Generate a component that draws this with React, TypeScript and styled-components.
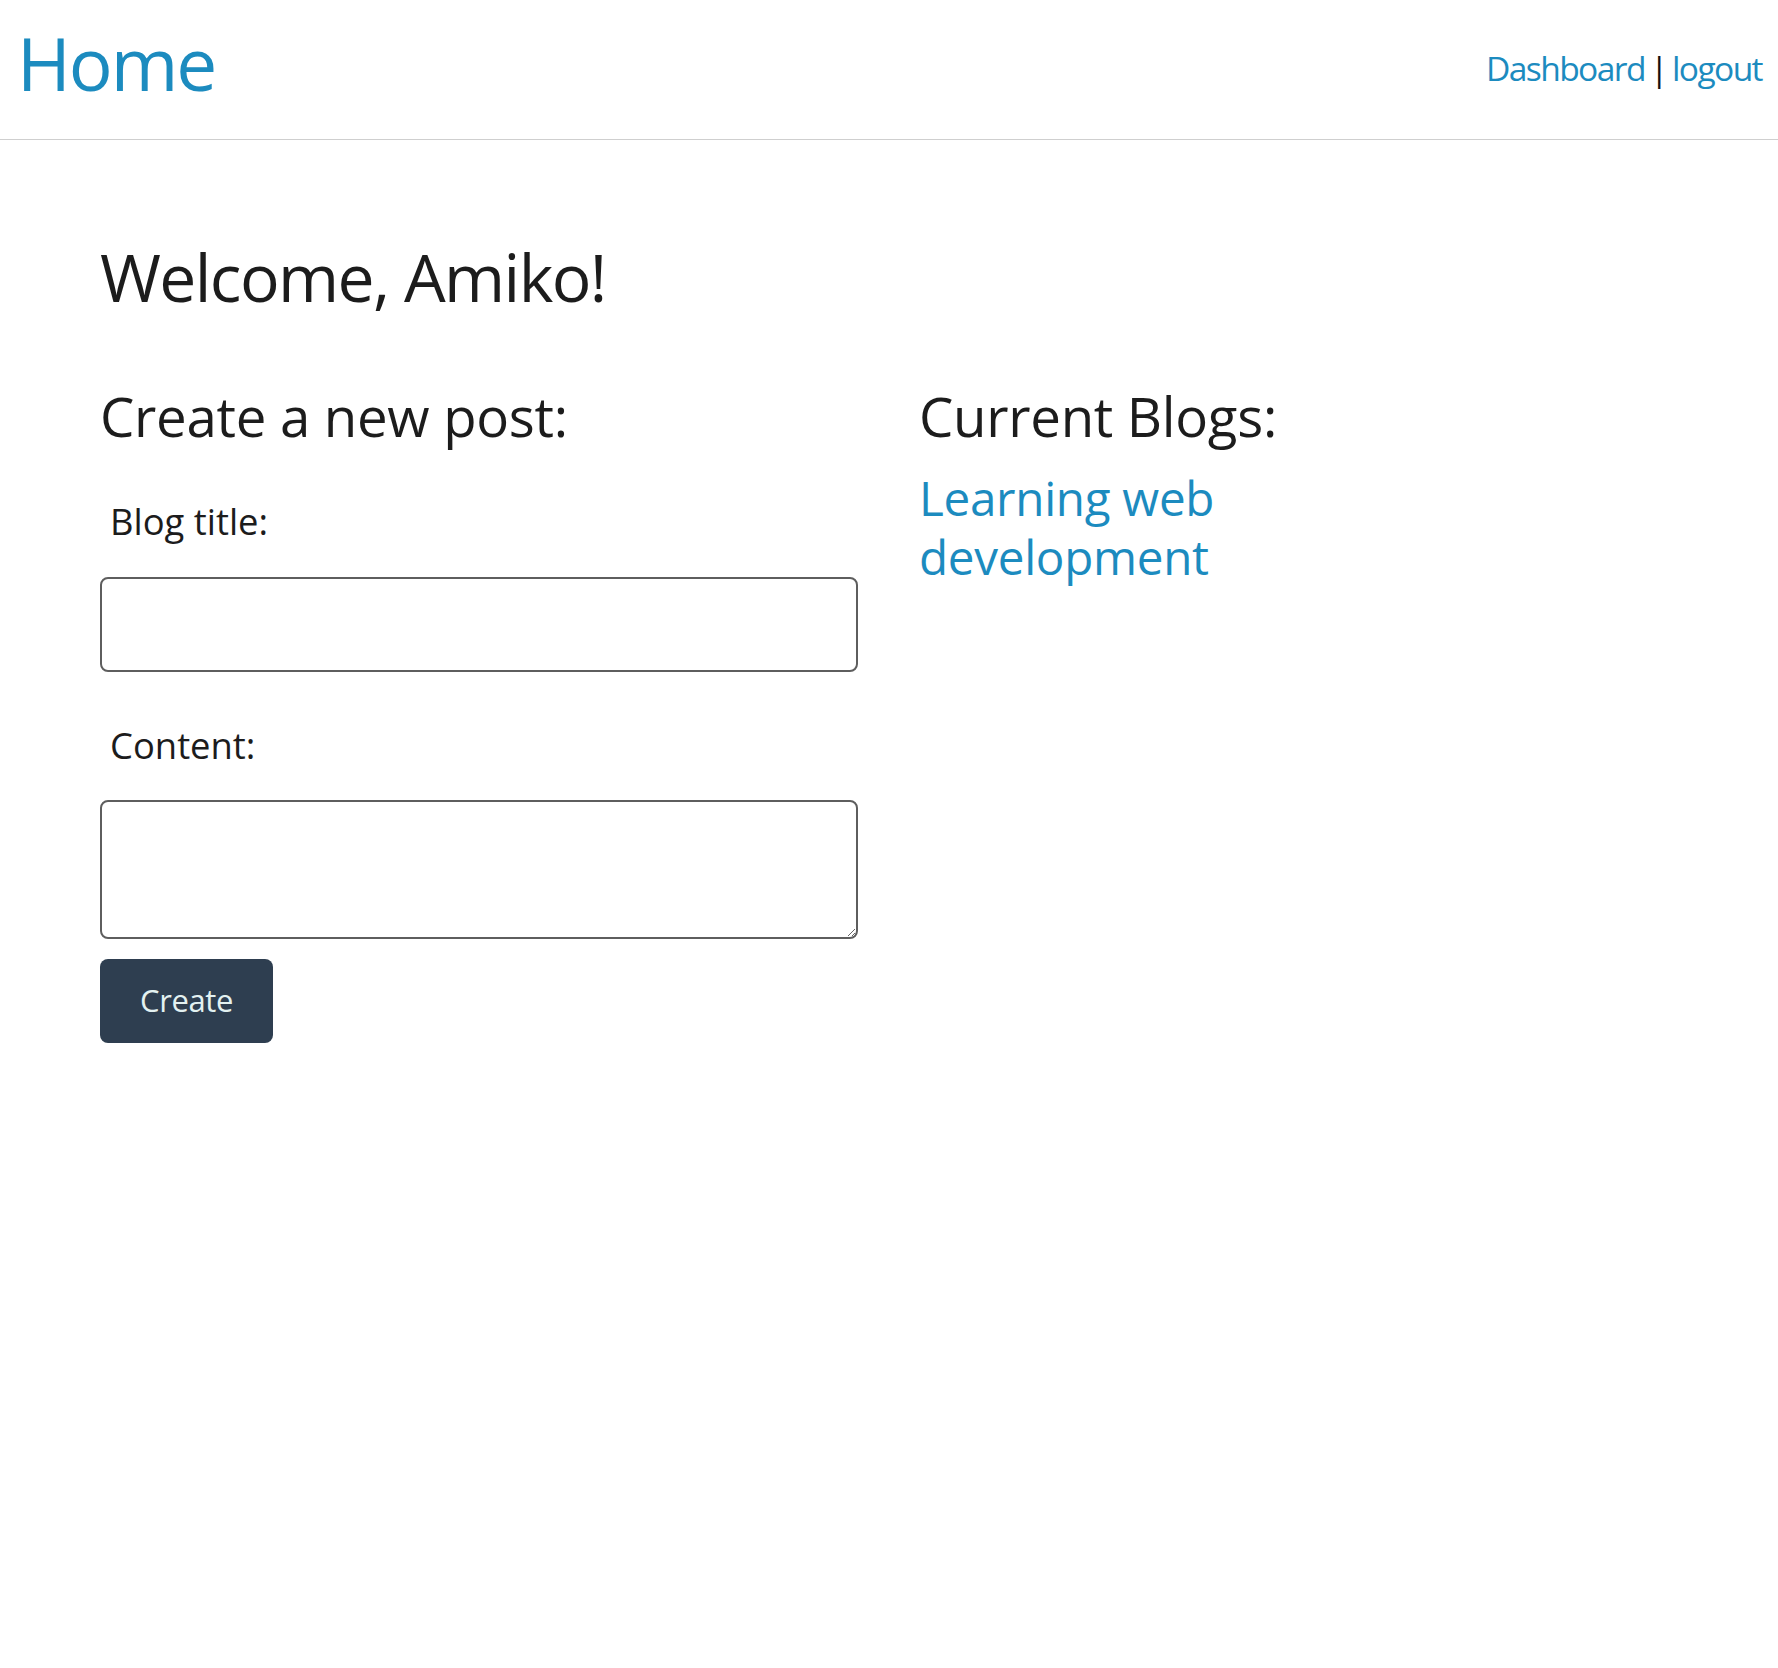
import React from "react";
import styled, { createGlobalStyle } from "styled-components";

const GlobalStyle = createGlobalStyle`
  html, body { margin: 0; padding: 0; background: #ffffff; }
  body {
    font-family: "Open Sans", "Noto Sans", "Liberation Sans", sans-serif;
    color: #1c1c1c;
  }
  * { box-sizing: border-box; }
`;

const Header = styled.header`
  display: flex;
  justify-content: space-between;
  align-items: flex-start;
  height: 140px;
  padding: 26px 16px 0 17px;
  border-bottom: 1px solid #cfcfcf;
`;

const Brand = styled.a`
  font-size: 73px;
  letter-spacing: -2px;
  line-height: 1;
  color: #1c8bbf;
  text-decoration: none;
`;

const Nav = styled.nav`
  margin-top: 26px;
  font-size: 33.6px;
  letter-spacing: -1.6px;
  word-spacing: -2px;
  line-height: 1;
  color: #111;
  white-space: pre;
`;

const NavLink = styled.a`
  color: #1c8bbf;
  text-decoration: none;
`;

const Main = styled.main`
  padding: 0 0 0 100px;
`;

const Welcome = styled.h1`
  margin: 103px 0 0;
  font-size: 66px;
  font-weight: 400;
  letter-spacing: -1.6px;
  line-height: 1;
  color: #1c1c1c;
`;

const Columns = styled.div`
  display: grid;
  grid-template-columns: 758px 420px;
  column-gap: 61px;
  margin-top: 80px;
`;

const Column = styled.section`
  display: flex;
  flex-direction: column;
  align-items: flex-start;
`;

const SectionTitle = styled.h2`
  margin: 0;
  font-size: 54.6px;
  font-weight: 400;
  letter-spacing: -0.3px;
  line-height: 1;
  color: #1c1c1c;
`;

const Form = styled.form`
  display: flex;
  flex-direction: column;
  align-items: stretch;
  width: 100%;
`;

const Label = styled.label<{ $top: number }>`
  display: block;
  margin-top: ${(p) => p.$top}px;
  padding-left: 10px;
  font-size: 36.4px;
  line-height: 1;
  color: #1c1c1c;
`;

const TextInput = styled.input`
  display: block;
  width: 100%;
  height: 95px;
  margin-top: 37px;
  border: 2px solid #5e5e5e;
  border-radius: 8px;
  background: #fff;
  font-size: 32px;
  padding: 0 12px;
  outline: none;
`;

const TextArea = styled.textarea`
  display: block;
  width: 100%;
  height: 139px;
  margin-top: 37px;
  border: 2px solid #5e5e5e;
  border-radius: 8px;
  background: #fff;
  font-size: 32px;
  padding: 8px 12px;
  outline: none;
`;

const Button = styled.button`
  align-self: flex-start;
  margin-top: 20px;
  width: 173px;
  height: 84px;
  border: none;
  border-radius: 8px;
  background: #2e3e50;
  color: #e3f1f1;
  font-family: inherit;
  font-size: 31px;
  letter-spacing: -0.4px;
  line-height: 1;
  padding: 0;
  cursor: pointer;
`;

const BlogLink = styled.a`
  display: block;
  margin-top: 24px;
  font-size: 47.6px;
  letter-spacing: -0.3px;
  line-height: 59px;
  color: #1c8bbf;
  text-decoration: none;
  max-width: 420px;
`;

export default function App() {
  return (
    <>
      <GlobalStyle />
      <Header>
        <Brand href="#">Home</Brand>
        <Nav>
          <NavLink href="#">Dashboard</NavLink>
          {" | "}
          <NavLink href="#">logout</NavLink>
        </Nav>
      </Header>
      <Main>
        <Welcome>Welcome, Amiko!</Welcome>
        <Columns>
          <Column>
            <SectionTitle>Create a new post:</SectionTitle>
            <Form onSubmit={(e) => e.preventDefault()}>
              <Label $top={59.5} htmlFor="title">Blog title:</Label>
              <TextInput id="title" type="text" />
              <Label $top={55} htmlFor="content">Content:</Label>
              <TextArea id="content" />
              <Button type="submit">Create</Button>
            </Form>
          </Column>
          <Column>
            <SectionTitle>Current Blogs:</SectionTitle>
            <BlogLink href="#">Learning web development</BlogLink>
          </Column>
        </Columns>
      </Main>
    </>
  );
}
